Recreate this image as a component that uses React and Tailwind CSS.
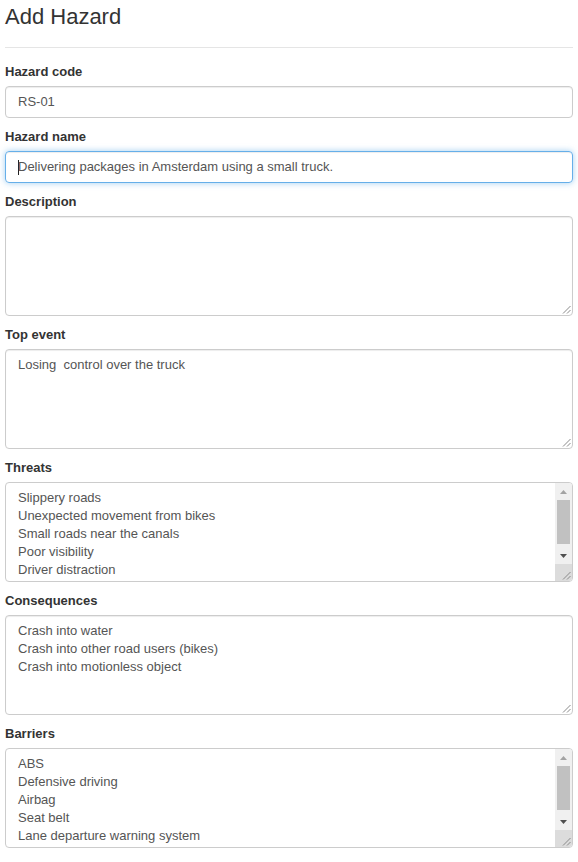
import React from 'react';

const font = { fontFamily: '"Liberation Sans", Arial, sans-serif' };

const Grip = () => (
  <svg width="9" height="9" viewBox="0 0 9 9" className="block">
    <line x1="8.5" y1="1" x2="1" y2="8.5" stroke="#8a8a8a" strokeWidth="1" />
    <line x1="8.5" y1="5" x2="5" y2="8.5" stroke="#8a8a8a" strokeWidth="1" />
  </svg>
);

const Label = ({ children }) => (
  <div className="text-[13px] font-bold leading-[18px] text-[#333] pt-[1px] mb-[5px]">{children}</div>
);

const TextBox = ({ lines = [] }) => (
  <div className="relative h-[100px] border border-[#ccc] rounded-[4px] bg-white px-[12px] py-[6px] text-[13px] leading-[18px] text-[#555] overflow-hidden shadow-[inset_0_1px_1px_rgba(0,0,0,0.075)]">
    {lines.map((l, i) => (
      <div key={i} className="whitespace-pre">{l}</div>
    ))}
    <div className="absolute right-[1px] bottom-[1px]">
      <Grip />
    </div>
  </div>
);

const ScrollBox = ({ lines }) => (
  <div className="flex h-[100px] border border-[#ccc] rounded-[4px] bg-white text-[13px] leading-[18px] text-[#555] overflow-hidden">
    <div className="flex-1 px-[12px] pt-[6px] overflow-hidden">
      {lines.map((l, i) => (
        <div key={i} className="whitespace-pre">{l}</div>
      ))}
    </div>
    <div className="w-[17px] flex flex-col bg-[#f0f0f0]">
      <div className="h-[17px] flex items-center justify-center">
        <svg width="7" height="4" viewBox="0 0 7 4"><polygon points="0,4 7,4 3.5,0" fill="#a3a3a3" /></svg>
      </div>
      <div className="flex-1 px-[2px] pb-[3px]">
        <div className="h-full bg-[#c1c1c1]" />
      </div>
      <div className="h-[17px] flex items-center justify-center">
        <svg width="7" height="4" viewBox="0 0 7 4"><polygon points="0,0 7,0 3.5,4" fill="#505050" /></svg>
      </div>
      <div className="h-[17px] bg-[#dcdcdc] flex items-end justify-end pr-[1px] pb-[1px]">
        <Grip />
      </div>
    </div>
  </div>
);

export default function App() {
  return (
    <div className="bg-white w-[578px] min-h-[862px] px-[5px]" style={font}>
      <div className="pt-[4px] pb-[17px] border-b border-[#e5e5e5]">
        <h3 className="text-[22px] leading-[26px] font-normal text-[#333]">Add Hazard</h3>
      </div>

      <form className="pt-[14px] flex flex-col gap-[9px]">
        <div>
          <Label>Hazard code</Label>
          <div className="h-[32px] border border-[#ccc] rounded-[4px] px-[12px] flex items-center text-[13px] text-[#555] shadow-[inset_0_1px_1px_rgba(0,0,0,0.075)]">
            RS-01
          </div>
        </div>

        <div>
          <Label>Hazard name</Label>
          <div className="h-[32px] border border-[#66afe9] rounded-[4px] px-[12px] flex items-center text-[13px] text-[#555] shadow-[inset_0_1px_1px_rgba(0,0,0,0.075),0_0_6px_rgba(102,175,233,0.6)]">
            <span className="inline-block w-px h-[15px] bg-[#222] -mr-px" />
            Delivering packages in Amsterdam using a small truck.
          </div>
        </div>

        <div>
          <Label>Description</Label>
          <TextBox />
        </div>

        <div>
          <Label>Top event</Label>
          <TextBox lines={['Losing  control over the truck']} />
        </div>

        <div>
          <Label>Threats</Label>
          <ScrollBox
            lines={[
              'Slippery roads',
              'Unexpected movement from bikes',
              'Small roads near the canals',
              'Poor visibility',
              'Driver distraction',
            ]}
          />
        </div>

        <div>
          <Label>Consequences</Label>
          <TextBox
            lines={[
              'Crash into water',
              'Crash into other road users (bikes)',
              'Crash into motionless object',
            ]}
          />
        </div>

        <div>
          <Label>Barriers</Label>
          <ScrollBox
            lines={[
              'ABS',
              'Defensive driving',
              'Airbag',
              'Seat belt',
              'Lane departure warning system',
            ]}
          />
        </div>
      </form>
    </div>
  );
}
